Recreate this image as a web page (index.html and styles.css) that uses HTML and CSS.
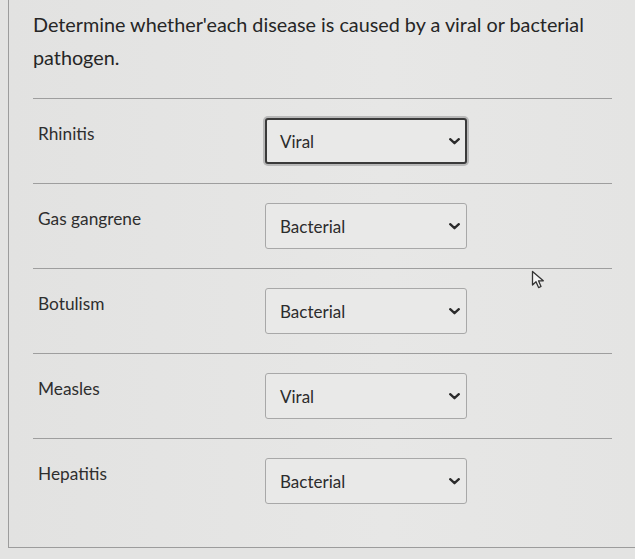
FILE: index.html
```html
<!DOCTYPE html>
<html lang="en">
<head>
    <meta charset="UTF-8">
    <meta name="viewport" content="width=device-width, initial-scale=1.0">
    <title>Viral or bacterial</title>
    <link rel="stylesheet" href="styles.css">
</head>
<body>

    <div class="frame">
        <p class="question">Determine whether'each disease is caused by a viral or bacterial pathogen.</p>

        <div class="rows">
            <div class="row">
                <span class="disease">Rhinitis</span>
                <div class="select focused"><span>Viral</span><svg class="chev" width="11" height="7" viewBox="0 0 11 7"><polyline points="1.2,1.2 5.5,5.2 9.8,1.2"/></svg></div>
            </div>
            <div class="row">
                <span class="disease">Gas gangrene</span>
                <div class="select"><span>Bacterial</span><svg class="chev" width="11" height="7" viewBox="0 0 11 7"><polyline points="1.2,1.2 5.5,5.2 9.8,1.2"/></svg></div>
            </div>
            <div class="row">
                <span class="disease">Botulism</span>
                <div class="select"><span>Bacterial</span><svg class="chev" width="11" height="7" viewBox="0 0 11 7"><polyline points="1.2,1.2 5.5,5.2 9.8,1.2"/></svg></div>
            </div>
            <div class="row">
                <span class="disease">Measles</span>
                <div class="select"><span>Viral</span><svg class="chev" width="11" height="7" viewBox="0 0 11 7"><polyline points="1.2,1.2 5.5,5.2 9.8,1.2"/></svg></div>
            </div>
            <div class="row last">
                <span class="disease">Hepatitis</span>
                <div class="select"><span>Bacterial</span><svg class="chev" width="11" height="7" viewBox="0 0 11 7"><polyline points="1.2,1.2 5.5,5.2 9.8,1.2"/></svg></div>
            </div>
        </div>

        <!-- mouse pointer -->
        <svg class="pointer" width="16" height="20" viewBox="0 0 16 20">
            <path d="M1.5 1.5 L1.5 15 L5 11.8 L7.6 17.6 L10 16.5 L7.5 10.8 L12.3 10.8 Z" fill="#f4f4f4" stroke="#333" stroke-width="1.3" stroke-linejoin="round"/>
        </svg>
    </div>

</body>
</html>
```

FILE: styles.css
```css
body {
    margin: 0;
    background-color: #e3e3e2;
    font-family: Lato, "Open Sans", sans-serif;
    color: #2b2b2b;
}
.frame {
    position: relative;
    margin-left: 8px;
    height: 539px;
    border-left: 1px solid #9c9c9c;
    border-bottom: 1px solid #9c9c9c;
    padding: 8px 24px 0 24px;
    background: linear-gradient(90deg, #e2e2e1 0%, #e7e7e6 60%, #e4e4e3 100%);
}
.question {
    margin: 0;
    font-size: 19.8px;
    line-height: 33px;
    max-width: 575px;
    color: #262626;
}
.rows {
    margin-top: 24px;
}
.row {
    display: grid;
    grid-template-columns: 232px 202px;
    align-items: start;
    height: 85px;
    border-top: 1px solid #9e9e9e;
    padding-top: 19px;
    box-sizing: border-box;
    margin-right: -1px;
}
.disease {
    padding-left: 5px;
    padding-top: 5px;
    font-size: 17.3px;
    color: #2e2e2e;
}
.select {
    display: flex;
    align-items: center;
    justify-content: space-between;
    height: 46px;
    box-sizing: border-box;
    border: 1px solid #a8a8a8;
    border-radius: 3px;
    padding: 0 6px 0 14px;
    background-color: #e9e9e8;
    font-size: 17px;
    color: #2c2c2c;
}
.select.focused {
    border: 2px solid #3a3a3a;
    box-shadow: 0 0 0 2px #b8b8b8;
    padding-left: 13px;
    padding-right: 5px;
}
.chev {
    fill: none;
    stroke: #2b2b2b;
    stroke-width: 2.3;
    stroke-linecap: round;
    stroke-linejoin: round;
}
.pointer {
    position: absolute;
    left: 522px;
    top: 270px;
}
```
